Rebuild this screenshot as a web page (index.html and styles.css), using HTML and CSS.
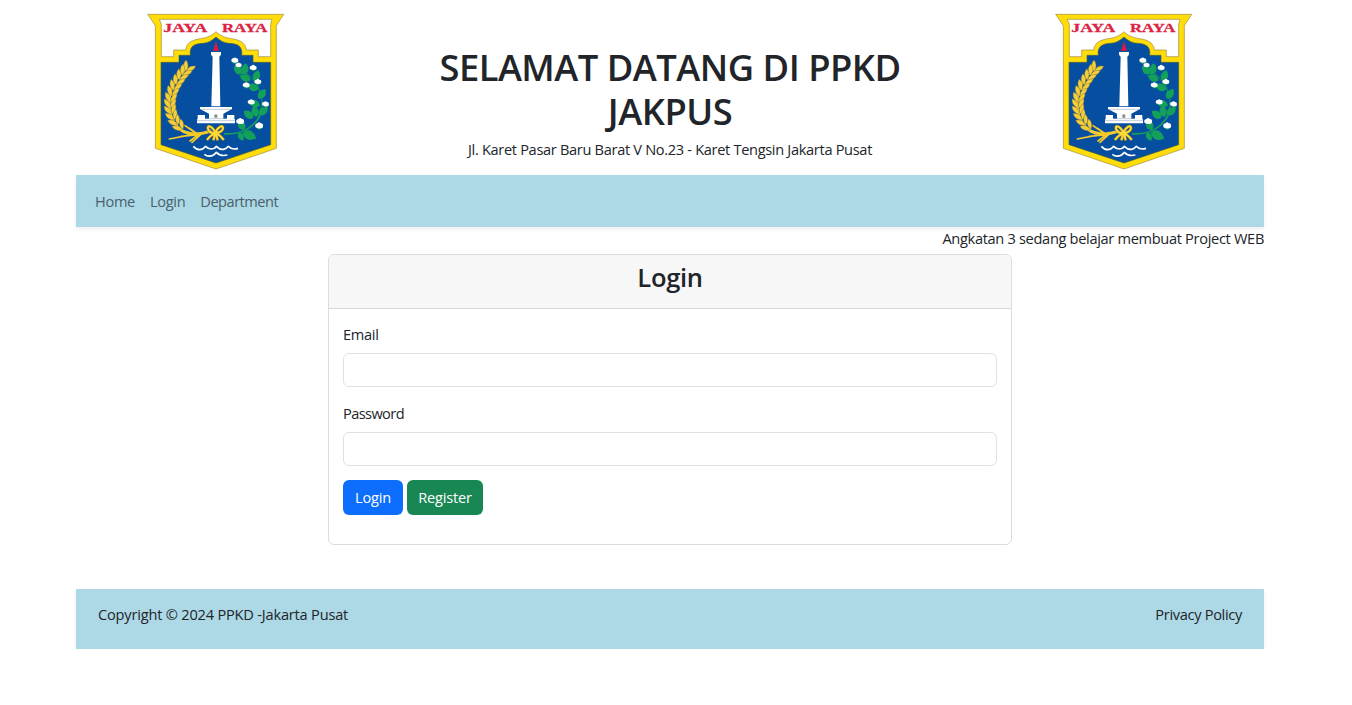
FILE: index.html
```html
<!DOCTYPE html>
<html lang="id">
<head>
<meta charset="utf-8">
<title>PPKD Jakpus - Login</title>
<link rel="stylesheet" href="styles.css">
</head>
<body>
<svg class="defs" width="0" height="0" aria-hidden="true">
  <defs>
    <g id="grain"><path d="M0 3C-14-2-20-12-17-26C-5-20 0-12 0 0C0-12 5-20 17-24C19-12 12-1 0 3Z" fill="#f4cf3a" stroke="#8a7a3a" stroke-width="1.2"/></g>
    <path id="leaf" d="M0 2C-15-4-16-19-2-33C13-22 14-8 0 2Z" fill="#13a05a"/>
    <g id="cotton"><path d="M-9 3Q0 16 9 3Z" fill="#13a05a"/><path d="M-10 3Q-13-6-5-7Q0-12 4-7Q12-7 9 4Q0 9-10 3Z" fill="#fff"/></g>
    <symbol id="crest" viewBox="0 0 480 510">
      <path d="M47 28H455L433 62V430L252 492L70 430V62Z" fill="#ffdc0a" stroke="#9c8a3c" stroke-width="2"/>
      <path d="M82 43H420L416 58V155H379V135H343C341 114 325 105 299 101C276 98 263 90 252 80C241 90 228 98 205 101C179 105 163 114 161 135H125V155H88V58Z" fill="#fff" stroke="#9c8a3c" stroke-width="2"/>
      <path d="M87 172H141V151H175C171 125 187 116 212 115C234 113 243 103 252 96C261 103 270 113 292 115C317 116 333 125 329 151H363V172H416V419L252 474L87 419Z" fill="#064fa0" stroke="#47613d" stroke-width="2"/>
      <text x="94" y="81" class="motto" textLength="132" lengthAdjust="spacingAndGlyphs">JAYA</text>
      <text x="270" y="81" class="motto" textLength="136" lengthAdjust="spacingAndGlyphs">RAYA</text>
      <path d="M252 108L260 138H243Z" fill="#e2173e"/>
      <path d="M237 141H267V149L262 155L265 304H238L242 155L237 149Z" fill="#fff"/>
      <path d="M204 306H300V312L274 326V341H285V330H307V343H309V355H195V343H197V330H219V341H231V326L204 312Z" fill="#fff"/>
      <path d="M219 341H285M195 347H309M205 313H299" stroke="#8b9bb5" stroke-width="1.5"/>
      <path d="M247 338V330Q252 326 256 330V338Z" fill="#858991"/>
      <path d="M166 187C125 219 107 262 112 310C117 354 143 382 177 386C197 389 215 385 238 378" fill="none" stroke="#f0ca32" stroke-width="9"/>
      <use href="#grain" transform="translate(164 196) rotate(30)"/>
      <use href="#grain" transform="translate(153 208) rotate(34)"/>
      <use href="#grain" transform="translate(143 222) rotate(29)"/>
      <use href="#grain" transform="translate(134 237) rotate(24)"/>
      <use href="#grain" transform="translate(126 253) rotate(18)"/>
      <use href="#grain" transform="translate(120 270) rotate(11)"/>
      <use href="#grain" transform="translate(116 288) rotate(4)"/>
      <use href="#grain" transform="translate(116 306) rotate(-5)"/>
      <use href="#grain" transform="translate(119 324) rotate(-14)"/>
      <use href="#grain" transform="translate(126 341) rotate(-25)"/>
      <use href="#grain" transform="translate(136 357) rotate(-35)"/>
      <use href="#grain" transform="translate(150 371) rotate(-44)"/>
      <path d="M195 387L159 362M193 388L152 378M190 390L148 394M183 388L112 402M201 387L174 408M210 385L180 412M195 386L173 370" stroke="#f4ca28" stroke-width="5" stroke-linecap="round"/>
      <path d="M276 386C335 391 378 359 392 312" fill="none" stroke="#13a05a" stroke-width="5"/>
      <path d="M318 184C340 204 369 221 380 250C391 278 397 302 377 342" fill="none" stroke="#13a05a" stroke-width="3"/>
      <use href="#leaf" transform="translate(331 205) rotate(-48)"/>
      <use href="#leaf" transform="translate(336 207) rotate(14)"/>
      <use href="#leaf" transform="translate(354 224) rotate(-66)"/>
      <use href="#leaf" transform="translate(370 227) rotate(18)"/>
      <use href="#leaf" transform="translate(377 252) rotate(-66)"/>
      <use href="#leaf" transform="translate(382 280) rotate(36)"/>
      <use href="#leaf" transform="translate(382 301) rotate(-66)"/>
      <use href="#leaf" transform="translate(383 329) rotate(50)"/>
      <use href="#leaf" transform="translate(362 338) rotate(-50)"/>
      <use href="#leaf" transform="translate(373 334) rotate(-10)"/>
      <use href="#leaf" transform="translate(336 373) rotate(-25)"/>
      <use href="#leaf" transform="translate(335 383) rotate(118) scale(1.25)"/>
      <use href="#leaf" transform="translate(321 384) rotate(155) scale(.8)"/>
      <use href="#cotton" transform="translate(309 167)"/>
      <use href="#cotton" transform="translate(320 181) scale(.9)"/>
      <use href="#cotton" transform="translate(364 189)"/>
      <use href="#cotton" transform="translate(378 231)"/>
      <use href="#cotton" transform="translate(343 241)"/>
      <use href="#cotton" transform="translate(358 292)"/>
      <use href="#cotton" transform="translate(401 298)"/>
      <use href="#cotton" transform="translate(325 350) scale(1.15)"/>
      <use href="#cotton" transform="translate(382 363) scale(1.15)"/>
      <path fill="none" stroke="#8d7424" stroke-width="9" d="M250 382C236 357 223 362 229 374C233 384 243 385 250 383C262 385 273 377 273 369C272 359 260 363 250 382M248 386C236 390 230 398 225 405M253 386C264 389 270 398 275 405M250 386L244 406M252 386L257 406"/>
      <path fill="none" stroke="#ffdc39" stroke-width="6" d="M250 382C236 357 223 362 229 374C233 384 243 385 250 383C262 385 273 377 273 369C272 359 260 363 250 382M248 386C236 390 230 398 225 405M253 386C264 389 270 398 275 405M250 386L244 406M252 386L257 406"/>
      <path d="M184 424Q193 434 203 434Q214 434 221 424Q232 436 247 430L253 424Q264 435 275 433Q284 431 289 424Q299 436 318 430M217 448Q230 458 246 449L253 442Q265 455 286 450" fill="none" stroke="#fff" stroke-width="5" stroke-linejoin="round"/>
    </symbol>
  </defs>
</svg>
<div class="container">
  <header class="masthead">
    <svg class="crest" role="img" aria-label="Jaya Raya"><use href="#crest"/></svg>
    <div class="title">
      <h1>SELAMAT DATANG DI PPKD JAKPUS</h1>
      <p class="address">Jl. Karet Pasar Baru Barat V No.23 - Karet Tengsin Jakarta Pusat</p>
    </div>
    <svg class="crest" role="img" aria-label="Jaya Raya"><use href="#crest"/></svg>
  </header>
  <nav class="navbar">
    <a class="nav-home" href="#">Home</a>
    <a class="nav-login" href="#">Login</a>
    <a class="nav-department" href="#">Department</a>
  </nav>
  <div class="ticker"><span>Angkatan 3 sedang belajar membuat Project WEB</span></div>
  <main class="card">
    <h2 class="card-header">Login</h2>
    <form class="card-body">
      <label for="email">Email</label>
      <input id="email" type="email">
      <label for="password">Password</label>
      <input id="password" type="password">
      <div class="actions">
        <button class="btn primary" type="button">Login</button>
        <button class="btn success" type="button">Register</button>
      </div>
    </form>
  </main>
  <footer class="footer">
    <span class="copyright">Copyright © 2024 PPKD -Jakarta Pusat</span>
    <span class="privacy">Privacy Policy</span>
  </footer>
</div>
</body>
</html>
```
FILE: styles.css
```css
* { box-sizing: border-box; }
body {
  margin: 0;
  background: #fff;
  color: #212529;
  font: 14.6px/22px "Open Sans", "Noto Sans", sans-serif;
  letter-spacing: -0.32px;
}
.defs { display: block; }
.container { width: 1188px; margin-left: 76px; }
.masthead {
  display: grid;
  grid-template-columns: 280px 1fr 280px;
  justify-items: center;
  height: 175px;
  padding-top: 5px;
}
.crest { width: 160px; height: 170px; margin-left: -9px; }
.motto { font: bold 35px "Liberation Serif", serif; letter-spacing: 0; fill: #dc2342; stroke: #dc2342; stroke-width: .8; }
.title { width: 560px; padding-top: 40px; text-align: center; }
h1 { margin: 0; font-size: 36.3px; line-height: 44px; font-weight: 600; letter-spacing: -0.5px; }
.address { margin: 5px 0 0; }
.navbar {
  display: flex;
  align-items: center;
  gap: 15px;
  height: 52px;
  padding: 0 19px;
  background: #add8e6;
  box-shadow: 0 2px 4px rgba(0, 0, 0, .07);
}
.navbar a { color: #48616a; text-decoration: none; }
.nav-department { letter-spacing: -0.5px; }
.ticker { height: 27px; text-align: right; }
.card {
  width: 684px;
  height: 291px;
  margin-left: 252px;
  border: 1px solid #dcdcdc;
  border-radius: 6px;
}
.card-header {
  height: 54px;
  margin: 0;
  padding-top: 6px;
  background: #f7f7f7;
  border-bottom: 1px solid #d8d8d8;
  border-radius: 5px 5px 0 0;
  font-size: 25.5px;
  line-height: 33px;
  font-weight: 600;
  text-align: center;
}
.card-body { padding: 14px 14px; }
label { display: block; margin-bottom: 8px; }
label[for="password"] { letter-spacing: -0.6px; }
input {
  display: block;
  width: 100%;
  height: 34px;
  margin-bottom: 14.5px;
  border: 1px solid #dee2e6;
  border-radius: 6px;
  background: #fff;
}
.actions { display: flex; gap: 4px; }
.btn {
  height: 35px;
  padding: 0 0 1px;
  border: 0;
  border-radius: 6px;
  color: #fff;
  font: inherit;
  letter-spacing: -0.2px;
}
.primary { width: 60px; background: #0d6efd; }
.success { width: 76px; background: #198754; }
.footer {
  display: flex;
  justify-content: space-between;
  height: 60px;
  margin-top: 44px;
  padding: 14px 22px;
  background: #add8e6;
  box-shadow: 0 2px 4px rgba(0, 0, 0, .07);
}
.copyright { letter-spacing: -0.2px; }
```
